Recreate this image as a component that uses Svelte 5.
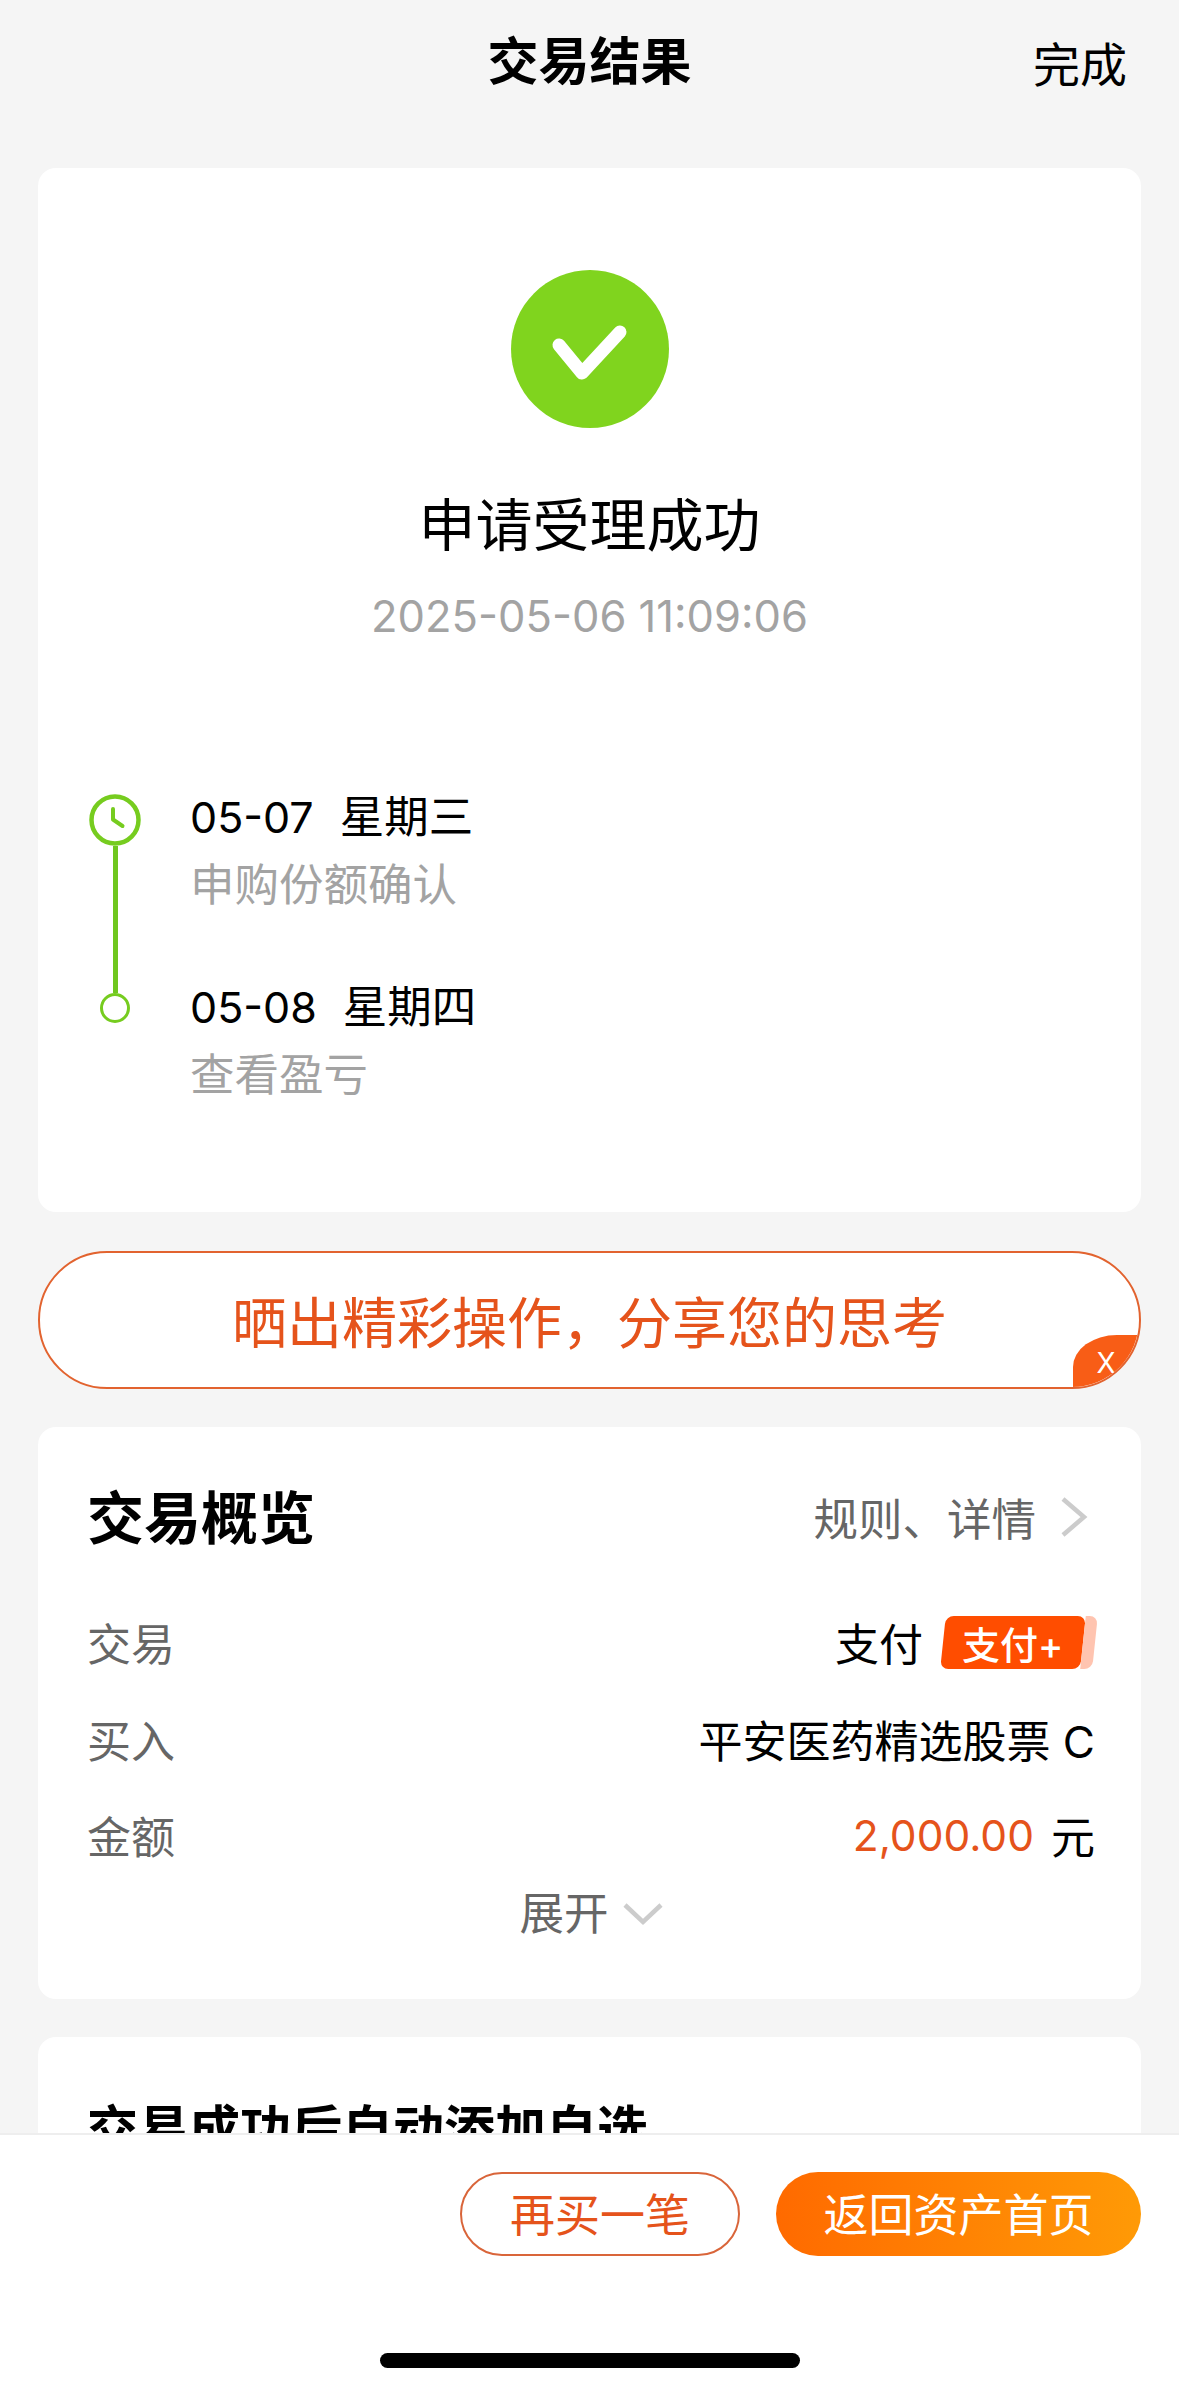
<script>
  const steps = [
    { date: '05-07', day: '星期三', note: '申购份额确认' },
    { date: '05-08', day: '星期四', note: '查看盈亏' },
  ]
</script>

<div class="page">
  <main class="scroll">
    <header class="nav">
      <h1>交易结果</h1>
      <span class="done">完成</span>
    </header>

    <section class="card result">
      <svg class="check" viewBox="0 0 158 158" aria-hidden="true">
        <circle cx="79" cy="79" r="79" fill="#80d41e" />
        <polyline points="48,75 71,103 109,62" fill="none" stroke="#fff" stroke-width="13" stroke-linecap="round" stroke-linejoin="round" />
      </svg>
      <h2>申请受理成功</h2>
      <p class="time">2025-05-06 11:09:06</p>

      <div class="timeline">
        <div class="rail">
          <svg class="clock" viewBox="0 0 52 52" aria-hidden="true">
            <circle cx="26" cy="26" r="23.5" fill="none" stroke="#76cc1f" stroke-width="4.5" />
            <path d="M24 15v10.5l9.5 6.5" fill="none" stroke="#76cc1f" stroke-width="4" stroke-linecap="round" stroke-linejoin="round" />
          </svg>
          <span class="line"></span>
          <span class="dot"></span>
        </div>
        <div class="steps">
          {#each steps as step}
            <div class="step">
              <div class="when"><span class="date">{step.date}</span><span>{step.day}</span></div>
              <div class="note">{step.note}</div>
            </div>
          {/each}
        </div>
      </div>
    </section>

    <div class="banner">
      <span>晒出精彩操作，分享您的思考</span>
      <span class="close">X</span>
    </div>

    <section class="card overview">
      <div class="head">
        <h3>交易概览</h3>
        <div class="more">
          规则、详情
          <svg width="28" height="42" viewBox="0 0 28 42" aria-hidden="true">
            <path d="M3 3l21 18L3 39" fill="none" stroke="#ccc" stroke-width="4.5" />
          </svg>
        </div>
      </div>
      <div class="row">
        <span class="label">交易</span>
        <span class="value">支付<span class="badge"><span>支付+</span></span></span>
      </div>
      <div class="row">
        <span class="label">买入</span>
        <span class="value">平安医药精选股票 C</span>
      </div>
      <div class="row">
        <span class="label">金额</span>
        <span class="value"><span class="amount">2,000.00</span>元</span>
      </div>
      <div class="expand">
        展开
        <svg width="40" height="24" viewBox="0 0 40 24" aria-hidden="true">
          <path d="M2 3l18 17L38 3" fill="none" stroke="#ccc" stroke-width="4.5" />
        </svg>
      </div>
    </section>

    <section class="card watch">
      <h3>交易成功后自动添加自选</h3>
    </section>
  </main>

  <footer class="footer">
    <div class="actions">
      <button class="ghost">再买一笔</button>
      <button class="primary">返回资产首页</button>
    </div>
    <div class="home"></div>
  </footer>
</div>

<style>
  :global(body) {
    margin: 0;
    background: #f5f5f5;
  }
  .page {
    width: 1179px;
    height: 2393px;
    display: flex;
    flex-direction: column;
    overflow: hidden;
    background: #f5f5f5;
    color: #000;
    font-family: Inter, "Noto Sans CJK SC", sans-serif;
  }
  .scroll {
    height: 2133px;
    flex: none;
    overflow: hidden;
    padding: 0 38px;
    box-sizing: border-box;
  }
  h1, h2, h3, p {
    margin: 0;
  }

  /* nav */
  .nav {
    height: 168px;
    position: relative;
    box-sizing: border-box;
    padding-top: 32px;
    text-align: center;
  }
  .nav h1 {
    font-size: 51px;
    line-height: 60px;
    font-weight: 700;
  }
  .done {
    position: absolute;
    right: 14px;
    top: 37px;
    font-size: 47px;
    line-height: 56px;
  }

  .card {
    background: #fff;
    border-radius: 18px;
  }

  /* result */
  .result {
    height: 1044px;
    box-sizing: border-box;
    padding-top: 102px;
    display: flex;
    flex-direction: column;
    align-items: center;
  }
  .check {
    width: 158px;
    height: 158px;
    flex: none;
  }
  .result h2 {
    margin-top: 60px;
    font-size: 57px;
    line-height: 76px;
    font-weight: 400;
  }
  .time {
    margin-top: 24px;
    font-size: 43.5px;
    line-height: 56px;
    color: #a3a3a3;
  }
  .timeline {
    align-self: stretch;
    display: flex;
    margin-top: 150px;
    padding-left: 51px;
  }
  .rail {
    width: 52px;
    display: flex;
    flex-direction: column;
    align-items: center;
  }
  .clock {
    width: 52px;
    height: 52px;
    flex: none;
  }
  .line {
    width: 5px;
    height: 147px;
    background: #70c71f;
  }
  .dot {
    width: 30px;
    height: 30px;
    box-sizing: border-box;
    border: 3px solid #76cc1f;
    border-radius: 50%;
  }
  .steps {
    margin-left: 49px;
    margin-top: -9px;
    display: flex;
    flex-direction: column;
    gap: 58px;
  }
  .when {
    font-size: 44.5px;
    line-height: 64px;
    display: flex;
    gap: 26px;
  }
  .date {
    font-size: 43px;
  }
  .note {
    margin-top: 4px;
    font-size: 44.5px;
    line-height: 64px;
    color: #a3a3a3;
  }

  /* share banner */
  .banner {
    position: relative;
    height: 138px;
    margin-top: 39px;
    box-sizing: border-box;
    border: 2px solid #e2632f;
    border-radius: 69px;
    background: #fff;
    overflow: hidden;
    display: flex;
    align-items: center;
    justify-content: center;
    padding-bottom: 3px;
    font-size: 55px;
    color: #e5531b;
  }
  .close {
    position: absolute;
    right: 0;
    bottom: 0;
    width: 66px;
    height: 52px;
    background: #f85d16;
    border-top-left-radius: 44px 32px;
    color: #fff;
    font-size: 28px;
    line-height: 52px;
    text-align: center;
    padding-top: 2px;
    box-sizing: border-box;
  }

  /* overview */
  .overview {
    margin-top: 38px;
    height: 572px;
    box-sizing: border-box;
    padding: 49px 46px 0 49px;
  }
  .head {
    display: flex;
    justify-content: space-between;
    align-items: center;
    height: 76px;
    margin-bottom: 42px;
  }
  .head h3 {
    font-size: 57px;
    font-weight: 700;
  }
  .more {
    display: flex;
    align-items: center;
    gap: 24px;
    font-size: 44.5px;
    color: #666;
    margin-right: 7px;
    margin-top: 5px;
  }
  .row {
    display: flex;
    justify-content: space-between;
    align-items: center;
    height: 96.5px;
    font-size: 44px;
  }
  .label {
    color: #666;
  }
  .value {
    display: flex;
    align-items: center;
  }
  .badge {
    position: relative;
    margin-left: 20px;
    width: 140px;
    height: 53px;
    margin-right: 12px;
    border-radius: 8px;
    background: #ff4d00;
    transform: skewX(-6deg);
    color: #fff;
    font-size: 38px;
    font-weight: 500;
    display: flex;
    align-items: center;
    justify-content: center;
  }
  .badge::after {
    content: "";
    position: absolute;
    left: 100%;
    top: 0;
    width: 12px;
    height: 100%;
    background: #ffc4b0;
    border-radius: 0 8px 8px 0;
  }
  .badge span {
    transform: skewX(6deg);
  }
  .amount {
    color: #e5531b;
    font-size: 42.5px;
    margin-right: 17px;
  }
  .expand {
    display: flex;
    align-items: center;
    justify-content: center;
    gap: 14px;
    height: 60px;
    margin-top: -3px;
    font-size: 44.5px;
    color: #666;
  }
  .expand svg {
    margin-top: 6px;
  }

  .watch {
    margin-top: 38px;
    height: 300px;
    padding: 57px 49px 0;
    box-sizing: border-box;
  }
  .watch h3 {
    font-size: 51px;
    line-height: 72px;
    font-weight: 700;
  }

  /* footer */
  .footer {
    flex: 1;
    background: #fff;
    border-top: 2px solid #eee;
    box-sizing: border-box;
    padding-top: 37px;
    display: flex;
    flex-direction: column;
  }
  .actions {
    display: flex;
    justify-content: flex-end;
    gap: 36px;
    padding-right: 38px;
  }
  .actions button {
    height: 84px;
    border-radius: 42px;
    font-family: inherit;
    font-size: 45px;
    padding: 0 0 3px;
  }
  .ghost {
    width: 280px;
    background: #fff;
    border: 2px solid #d9653a;
    color: #e5531b;
  }
  .primary {
    width: 365px;
    border: 0;
    color: #fff;
    background: linear-gradient(90deg, #ff6a00, #ff9a06);
  }
  .home {
    width: 420px;
    height: 15px;
    margin: 97px auto 0;
    background: #000;
    border-radius: 8px;
  }
</style>
